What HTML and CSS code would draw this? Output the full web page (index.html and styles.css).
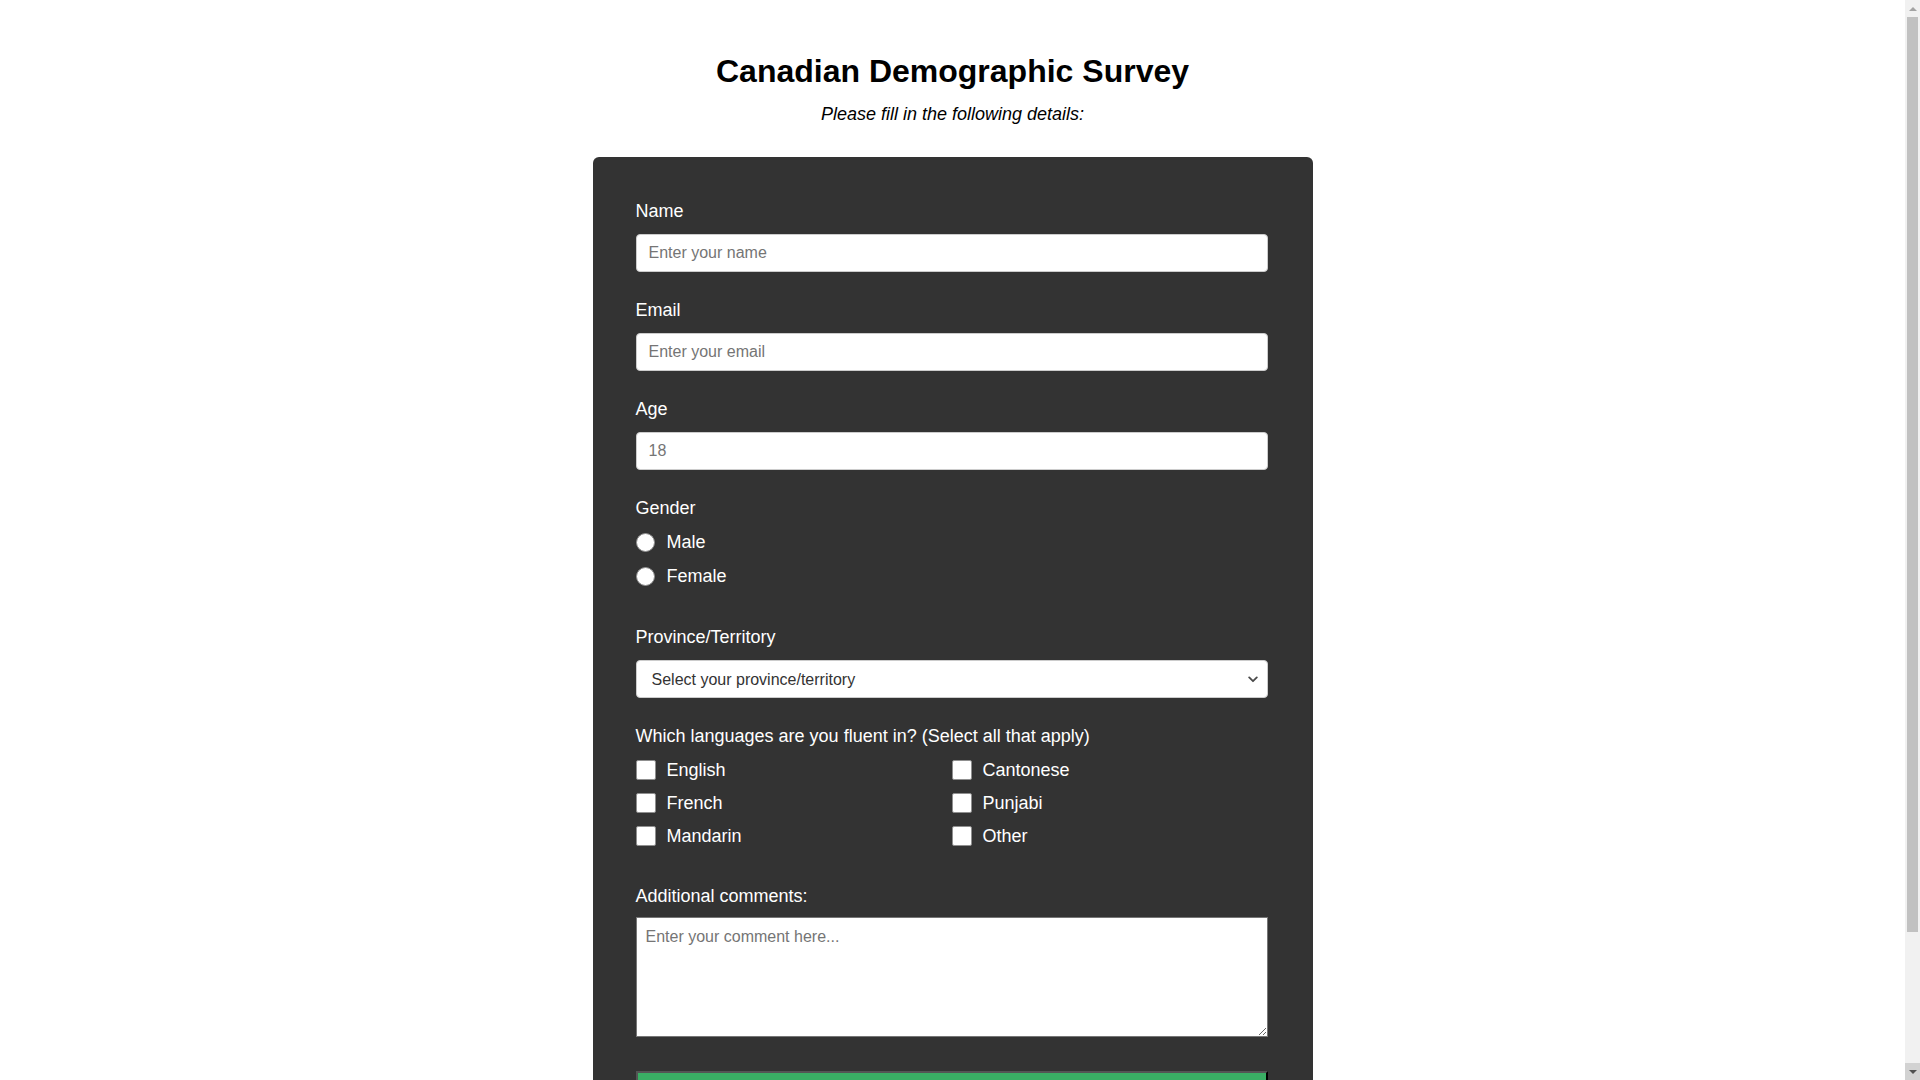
FILE: index.html
```html
<!DOCTYPE html>
<html lang="en">
<head>
<meta charset="utf-8">
<title>Canadian Demographic Survey</title>
<link rel="stylesheet" href="styles.css">
</head>
<body>
<div class="page">
  <header class="header">
    <h1 class="title">Canadian Demographic Survey</h1>
    <p class="subtitle">Please fill in the following details:</p>
  </header>
  <form class="card">
    <div class="group">
      <label class="label" for="name">Name</label>
      <input class="field" id="name" type="text" placeholder="Enter your name">
    </div>
    <div class="group">
      <label class="label" for="email">Email</label>
      <input class="field" id="email" type="email" placeholder="Enter your email">
    </div>
    <div class="group">
      <label class="label" for="age">Age</label>
      <input class="field" id="age" type="text" placeholder="18">
    </div>
    <div class="group">
      <span class="label">Gender</span>
      <label class="option radio-row"><input class="radio" type="radio" name="gender"><span>Male</span></label>
      <label class="option radio-row"><input class="radio" type="radio" name="gender"><span>Female</span></label>
    </div>
    <div class="group">
      <label class="label" for="prov">Province/Territory</label>
      <div class="select-wrap">
        <select class="field select" id="prov">
          <option>Select your province/territory</option>
        </select>
        <svg class="chevron" width="10" height="7" viewBox="0 0 10 7" aria-hidden="true"><path d="M1.2 1.4 L5 5.2 L8.8 1.4" fill="none" stroke="#4a4a4a" stroke-width="1.8" stroke-linecap="round" stroke-linejoin="round"/></svg>
      </div>
    </div>
    <div class="group">
      <span class="label">Which languages are you fluent in? (Select all that apply)</span>
      <div class="lang-grid">
        <label class="option check-row"><input class="check" type="checkbox"><span>English</span></label>
        <label class="option check-row"><input class="check" type="checkbox"><span>Cantonese</span></label>
        <label class="option check-row"><input class="check" type="checkbox"><span>French</span></label>
        <label class="option check-row"><input class="check" type="checkbox"><span>Punjabi</span></label>
        <label class="option check-row"><input class="check" type="checkbox"><span>Mandarin</span></label>
        <label class="option check-row"><input class="check" type="checkbox"><span>Other</span></label>
      </div>
    </div>
    <div class="group group-comments">
      <label class="label label-comments" for="comments">Additional comments:</label>
      <textarea class="comments" id="comments" placeholder="Enter your comment here..."></textarea>
    </div>
    <button class="submit" type="submit">Submit</button>
  </form>
</div>
<div class="scrollbar" aria-hidden="true">
  <div class="scroll-btn scroll-up"><span class="tri-up"></span></div>
  <div class="scroll-thumb"></div>
  <div class="scroll-btn scroll-down"><span class="tri-down"></span></div>
</div>
</body>
</html>
```

FILE: styles.css
```css
html, body {
  margin: 0;
  padding: 0;
  height: 100%;
  background: #ffffff;
  overflow: hidden;
}

body {
  font-family: "Liberation Sans", Arial, sans-serif;
  font-size: 18px;
  color: #000;
}

.page {
  padding: 53px 15px 71px 0;
}

.header {
  text-align: center;
}

.title {
  margin: 0 0 14px;
  font-size: 32px;
  font-weight: bold;
  line-height: 37px;
}

.subtitle {
  margin: 0 0 32px;
  font-style: italic;
  font-size: 18px;
  line-height: 21px;
}

.card {
  box-sizing: border-box;
  width: 720px;
  margin: 0 auto;
  padding: 44px 45px 44px 43px;
  background: #333333;
  border-radius: 6px;
  color: #ffffff;
}

.group {
  display: flow-root;
  margin-bottom: 28px;
}

.label {
  display: block;
  font-size: 18px;
  line-height: 21px;
  margin-bottom: 12px;
  color: #ffffff;
}

.label-comments {
  margin-bottom: 10px;
}

.field {
  display: block;
  box-sizing: border-box;
  width: 100%;
  height: 38px;
  margin: 0;
  padding: 0 12px;
  border: 1px solid #cccccc;
  border-radius: 4px;
  background: #ffffff;
  font-family: "Liberation Sans", Arial, sans-serif;
  font-size: 16px;
  color: #333;
}

.field::placeholder {
  color: #757575;
}

.select-wrap {
  position: relative;
}

.select {
  appearance: none;
  -webkit-appearance: none;
  padding: 0 30px 0 15px;
  color: #333333;
}

.chevron {
  position: absolute;
  right: 10px;
  top: 16px;
  pointer-events: none;
}

.option {
  display: flex;
  align-items: center;
  gap: 11px;
  height: 22px;
  font-size: 18px;
  line-height: 22px;
  color: #ffffff;
}

.radio-row {
  gap: 12px;
  margin-bottom: 12px;
}

.check-row {
  margin-bottom: 11px;
}

.radio {
  appearance: none;
  -webkit-appearance: none;
  box-sizing: border-box;
  width: 19px;
  height: 19px;
  margin: 0;
  border: 1px solid #8f8f8f;
  border-radius: 50%;
  background: #ffffff;
  flex: none;
}

.check {
  appearance: none;
  -webkit-appearance: none;
  box-sizing: border-box;
  width: 20px;
  height: 20px;
  margin: 0;
  border: 1px solid #8f8f8f;
  border-radius: 2px;
  background: #ffffff;
  flex: none;
}

.lang-grid {
  display: grid;
  grid-template-columns: 1fr 1fr;
}

.group-comments {
  margin-bottom: 34px;
}

.comments {
  display: block;
  box-sizing: border-box;
  width: 100%;
  height: 120px;
  margin: 0;
  padding: 10px 9px;
  border: 1px solid #767676;
  border-radius: 0;
  background: #ffffff;
  font-family: "Liberation Sans", Arial, sans-serif;
  font-size: 16px;
  resize: vertical;
}

.comments::placeholder {
  color: #757575;
}

.submit {
  display: block;
  width: 100%;
  padding: 12px 0;
  margin: 0;
  background: #3aae64;
  color: #ffffff;
  font-family: "Liberation Sans", Arial, sans-serif;
  font-size: 18px;
  line-height: 21px;
  cursor: pointer;
}

/* window scrollbar */
.scrollbar {
  position: fixed;
  top: 0;
  right: 0;
  width: 15px;
  height: 100vh;
  background: #f1f1f1;
  display: flex;
  flex-direction: column;
}

.scroll-btn {
  height: 17px;
  flex: none;
  display: flex;
  align-items: center;
  justify-content: center;
}

.scroll-down {
  margin-top: auto;
  background: #d2d2d2;
}

.scroll-thumb {
  height: 915px;
  margin: 0 2px 0 2px;
  background: #c1c1c1;
}

.tri-up {
  width: 0;
  height: 0;
  border-left: 4px solid transparent;
  border-right: 4px solid transparent;
  border-bottom: 4px solid #a3a3a3;
}

.tri-down {
  width: 0;
  height: 0;
  border-left: 4px solid transparent;
  border-right: 4px solid transparent;
  border-top: 4px solid #505050;
}
```
